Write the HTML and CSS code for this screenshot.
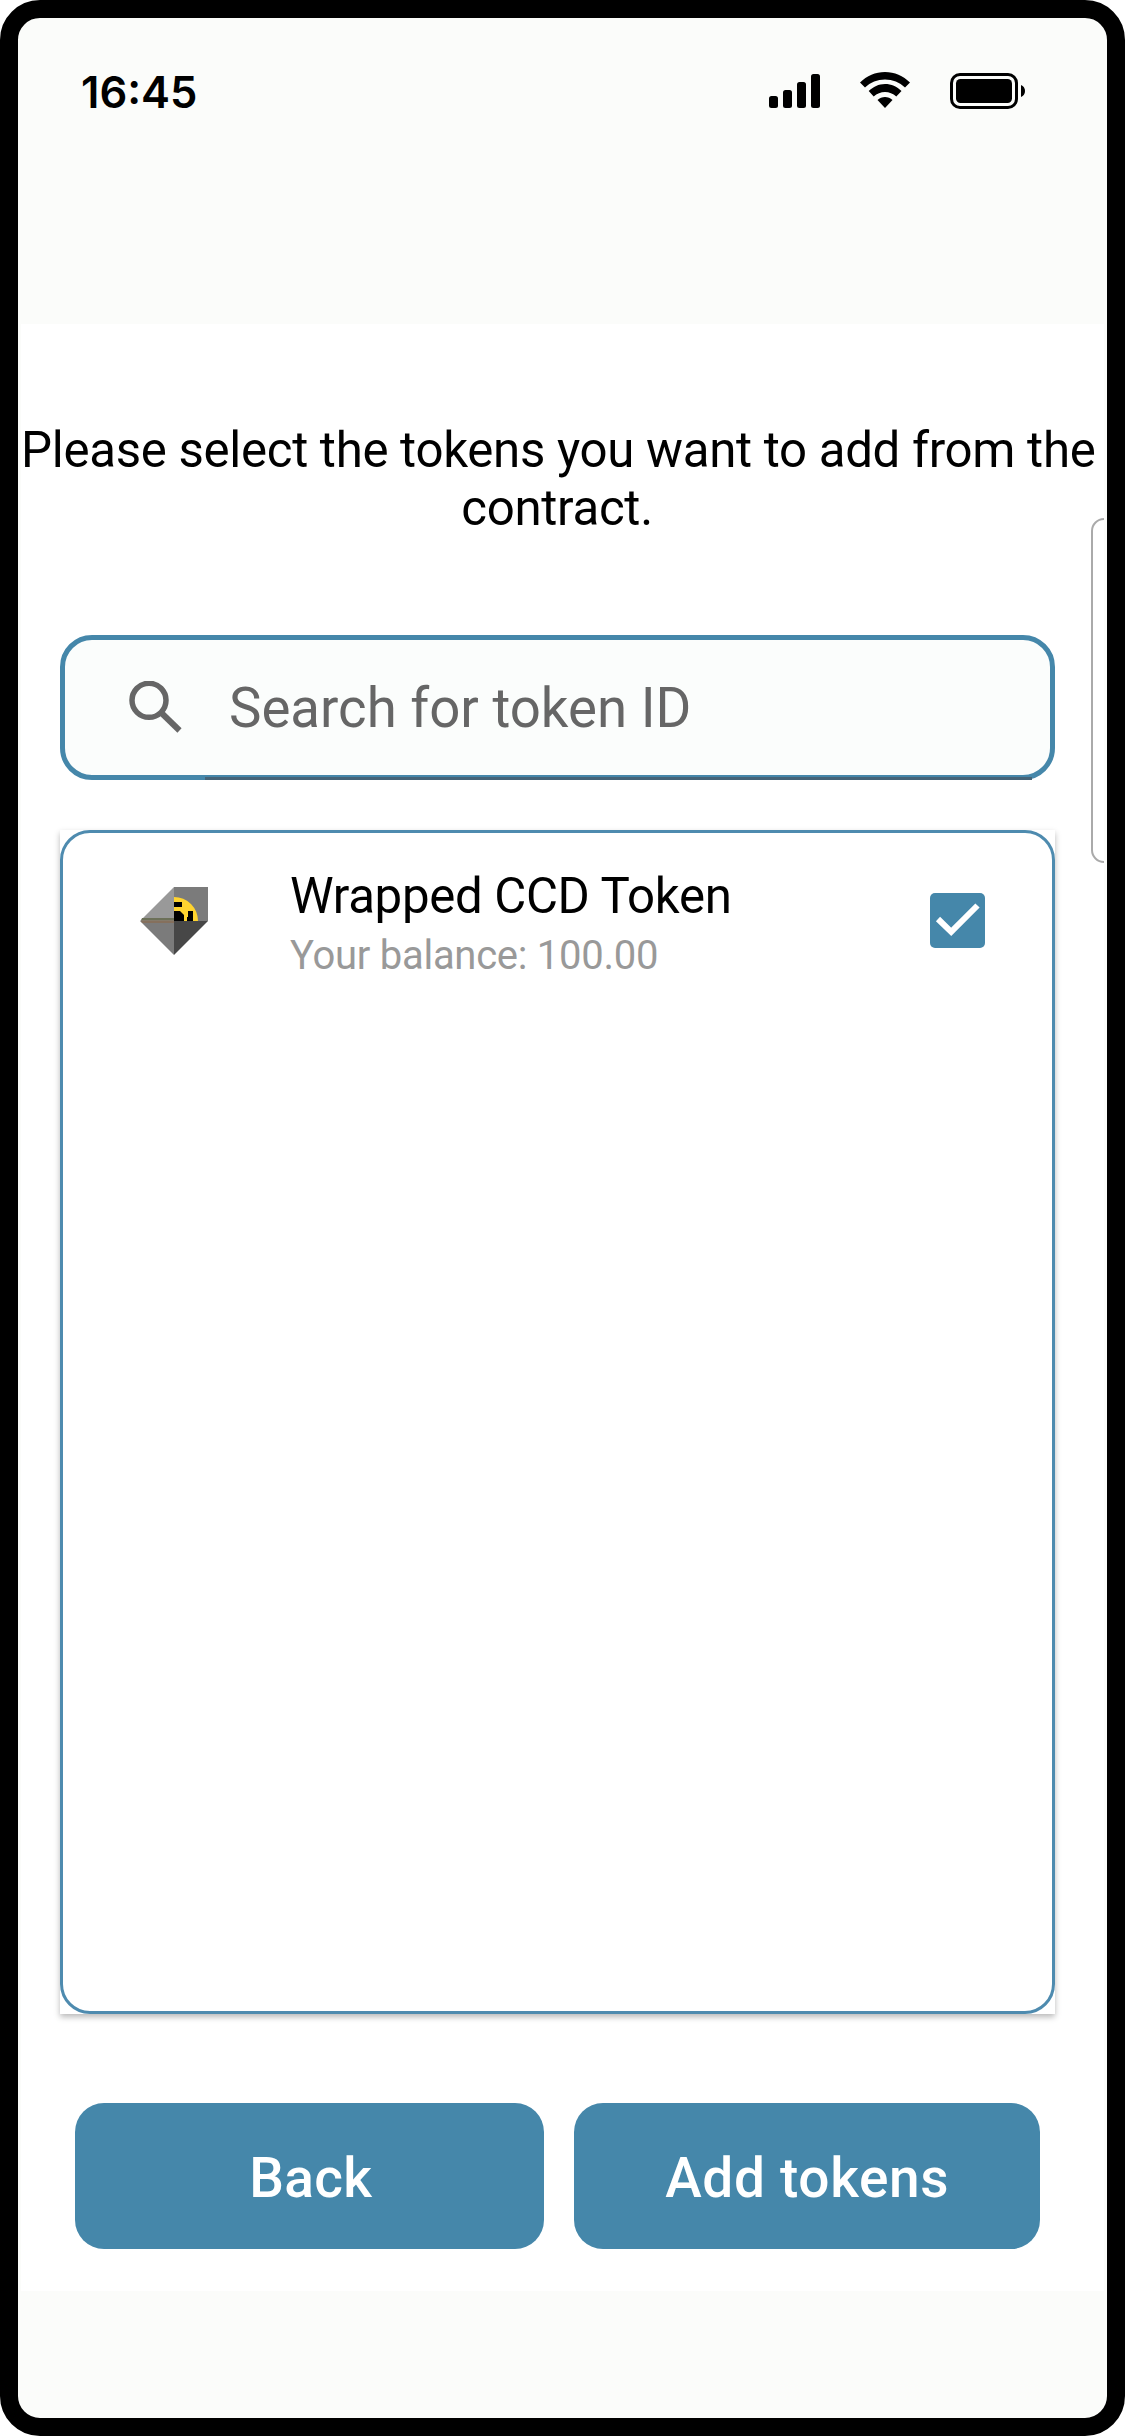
FILE: index.html
```html
<!DOCTYPE html>
<html lang="en">
<head>
<meta charset="utf-8">
<title>Add tokens</title>
<link rel="stylesheet" href="styles.css">
</head>
<body>
<div class="phone">
  <header class="status">
    <span class="time">16:45</span>
    <svg class="signal" viewBox="0 0 51 34" width="51" height="34"><rect y="22" width="9" height="12" rx="2.5"/><rect x="14" y="16" width="9" height="18" rx="2.5"/><rect x="28" y="8" width="9" height="26" rx="2.5"/><rect x="42" width="9" height="34" rx="2.5"/></svg>
    <svg class="wifi" viewBox="0 0 50 36" width="50" height="36"><path d="M25 0C15.500 0 6.800 3.900 0 10.500L5 15.500C10.500 10.300 17.400 7.500 25 7.500S39.500 10.300 45 15.500L50 10.500C43.200 3.900 34.500 0 25 0Z"/><path d="M25 12C18.700 12 13.200 14.800 8.700 19L13.700 24.500C17 21.500 20.800 20 25 20S33 21.500 36.300 24.500L41.500 19C36.900 14.600 31.300 12 25 12Z"/><path d="M25 25C22.300 25 19.500 26.100 17.500 28L25 36L32.500 28C30.500 26.100 27.700 25 25 25Z"/></svg>
    <svg class="battery" viewBox="0 0 75 36" width="75" height="36"><rect x="1.500" y="1.500" width="65" height="33" rx="8.500" fill="none" stroke="#000" stroke-width="3"/><rect x="6" y="6" width="56" height="24" rx="4.500"/><path d="M71 12C73.500 13 75 15.300 75 18S73.500 23 71 24Z"/></svg>
  </header>
  <main class="panel">
    <p class="prompt"><span>Please select the tokens you want to add from the</span><br><span>contract.</span></p>
    <div class="search">
      <svg class="glass" viewBox="0 0 54 54" width="54" height="54"><circle cx="20" cy="19.300" r="17" fill="none" stroke="#666" stroke-width="5.500"/><path d="M32 31.500L50.500 49.500" stroke="#666" stroke-width="6"/></svg>
      <span class="hint">Search for token ID</span>
      <i class="underline"></i>
    </div>
    <section class="list">
      <div class="list-frame">
        <div class="token">
          <svg class="logo" viewBox="0 0 68 68" width="68" height="68"><path d="M0 34L34 0V34Z" fill="#999"/><path d="M34 0H68V34H34Z" fill="#7b7b7b"/><path d="M0 34H34V68Z" fill="#7b7b7b"/><path d="M34 34H68L34 68Z" fill="#474747"/><path d="M2 31H34V33.500H1Z" fill="#6c7058"/><path d="M1 33.500H34V36H2Z" fill="#85705d"/><path d="M34 10A24 24 0 0 1 58 34H34Z" fill="#ffd42f"/><path d="M34 15H42V20H34ZM34 24H40L44 28V34H34ZM48 24H53V34H47V30H48Z"/></svg>
          <div class="copy"><div class="name">Wrapped CCD Token</div><div class="balance">Your balance: 100.00</div></div>
          <svg class="check" viewBox="0 0 55 55" width="55" height="55"><rect width="55" height="55" rx="5" fill="#4587aa"/><path d="M8 26L21.200 38.800L47.500 12.500" fill="none" stroke="#fff" stroke-width="6"/></svg>
        </div>
      </div>
    </section>
    <div class="actions"><button class="btn back">Back</button><button class="btn add">Add tokens</button></div>
    <i class="drawer"></i>
  </main>
</div>
</body>
</html>
```
FILE: styles.css
```css
* { box-sizing: border-box; }
body { margin: 0; background: #fff; font-family: Roboto, sans-serif; }
.phone { width: 1125px; height: 2436px; border: 18px solid #000; border-radius: 40px; background: #fbfcfa; }
.status { height: 306px; padding: 54px 82px 0 63px; display: flex; align-items: flex-start; }
.time { font: 600 43.500px/50px Inter, sans-serif; margin: -5px auto 0 0; }
.signal { margin-top: 2px; }
.wifi { margin-left: 40px; }
.battery { margin: 1px 0 0 40px; }
.panel { position: relative; overflow: hidden; width: 1083px; height: 1967px; margin-left: 3px; padding: 98px 49px 0 39px; background: #fff; }
.prompt { margin: 0 -49px 0 -39px; padding-right: 11px; height: 213px; font-size: 49.200px; letter-spacing: -.3px; line-height: 57.500px; text-align: center; white-space: nowrap; }
.search { position: relative; height: 145px; border: 5px solid #4587aa; border-radius: 32px; background: #fbfdfc; display: flex; align-items: center; }
.glass { margin-left: 64px; }
.hint { margin: 1px 0 0 46px; font-size: 54.600px; color: #666; white-space: nowrap; }
.underline { position: absolute; left: 140px; right: 18px; bottom: -5px; height: 3px; background: #456478; }
.list { margin-top: 50px; height: 1184px; box-shadow: 0 3px 6px rgba(0,0,0,.28); background: #fff; }
.list-frame { height: 100%; border: 3px solid #4e8baf; border-radius: 30px; }
.token { display: flex; padding: 32px 67px 0 77px; }
.logo { margin-top: 22px; }
.copy { margin: 1px 0 0 82px; white-space: nowrap; }
.name { font-size: 49.200px; letter-spacing: -.33px; line-height: 60px; }
.balance { font-size: 40px; letter-spacing: -.27px; line-height: 60px; color: #999; }
.check { margin: 28px 0 0 auto; }
.actions { display: flex; gap: 30px; margin: 89px 15px 0 15px; }
.btn { flex: 1; height: 146px; border: 0; border-radius: 29px; background: #4587aa; color: #fff; font: 500 55px Roboto, sans-serif; padding: 3px 0 0; }
.back { letter-spacing: .3px; padding-left: 3px; }
.add { letter-spacing: .65px; padding-left: 1px; }
.drawer { position: absolute; left: 1070px; top: 194px; width: 40px; height: 345px; border: 2px solid #aaa; border-radius: 13px; }
```
